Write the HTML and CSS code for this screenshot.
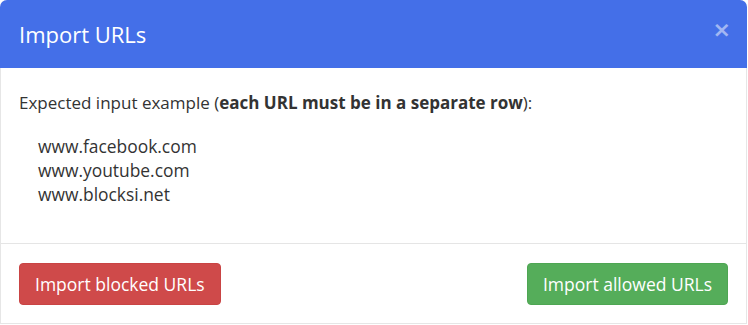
FILE: index.html
```html
<!DOCTYPE html>
<html>
<head>
<meta charset="utf-8">
<link rel="stylesheet" href="styles.css">
</head>
<body>
<div class="modal">
  <div class="modal-header">
    <h4 class="modal-title">Import URLs</h4>
    <button class="close" type="button">&times;</button>
  </div>
  <div class="modal-body">
    <p class="intro">Expected input example (<strong>each URL must be in a separate row</strong>):</p>
    <ul class="urls">
      <li>www.facebook.com</li>
      <li>www.youtube.com</li>
      <li>www.blocksi.net</li>
    </ul>
  </div>
  <div class="modal-footer">
    <button class="btn btn-danger" type="button">Import blocked URLs</button>
    <button class="btn btn-success" type="button">Import allowed URLs</button>
  </div>
</div>
</body>
</html>
```

FILE: styles.css
```css
* { box-sizing: border-box; }
html, body { margin: 0; padding: 0; background: #fff; }
body {
  font-family: "Open Sans", "Liberation Sans", sans-serif;
  color: #333;
  font-size: 17px;
  line-height: 24px;
}
.modal {
  width: 747px;
  height: 324px;
  border: 1px solid #e6e6e6;
  border-top: none;
  border-radius: 7px 7px 0 0;
  display: flex;
  flex-direction: column;
}
.modal-header {
  height: 68px;
  background: #446fe8;
  border-radius: 7px 7px 0 0;
  margin: 0 -1px;
  display: flex;
  align-items: center;
  justify-content: space-between;
  padding: 0 16px 0 19px;
}
.modal-title {
  margin: 0;
  color: #fff;
  font-weight: 400;
  font-size: 22px;
  line-height: 28px;
}
.close {
  background: none;
  border: none;
  padding: 0;
  color: #fff;
  opacity: 0.5;
  font-family: "DejaVu Sans", sans-serif;
  font-weight: 700;
  font-size: 22px;
  line-height: 22px;
  margin-top: -9px;
}
.modal-body {
  padding: 23px 18px 0 18px;
  height: 176px;
  border-bottom: 1px solid #e5e5e5;
}
.intro { margin: 0 0 19px 0; }
.urls {
  list-style: none;
  margin: 0;
  padding: 0 0 0 19px;
  font-size: 17.4px;
}
.modal-footer {
  display: flex;
  justify-content: space-between;
  padding: 19px 18px 0 18px;
}
.btn {
  font-family: "Open Sans", "Liberation Sans", sans-serif;
  font-size: 17.5px;
  line-height: 24px;
  color: #fff;
  border: 1px solid transparent;
  border-radius: 4px;
  height: 42px;
  padding: 0 15px;
}
.btn-danger { background: #cf4a4a; border-color: #c94444; }
.btn-success { background: #55ad5a; border-color: #4ea653; }
```
